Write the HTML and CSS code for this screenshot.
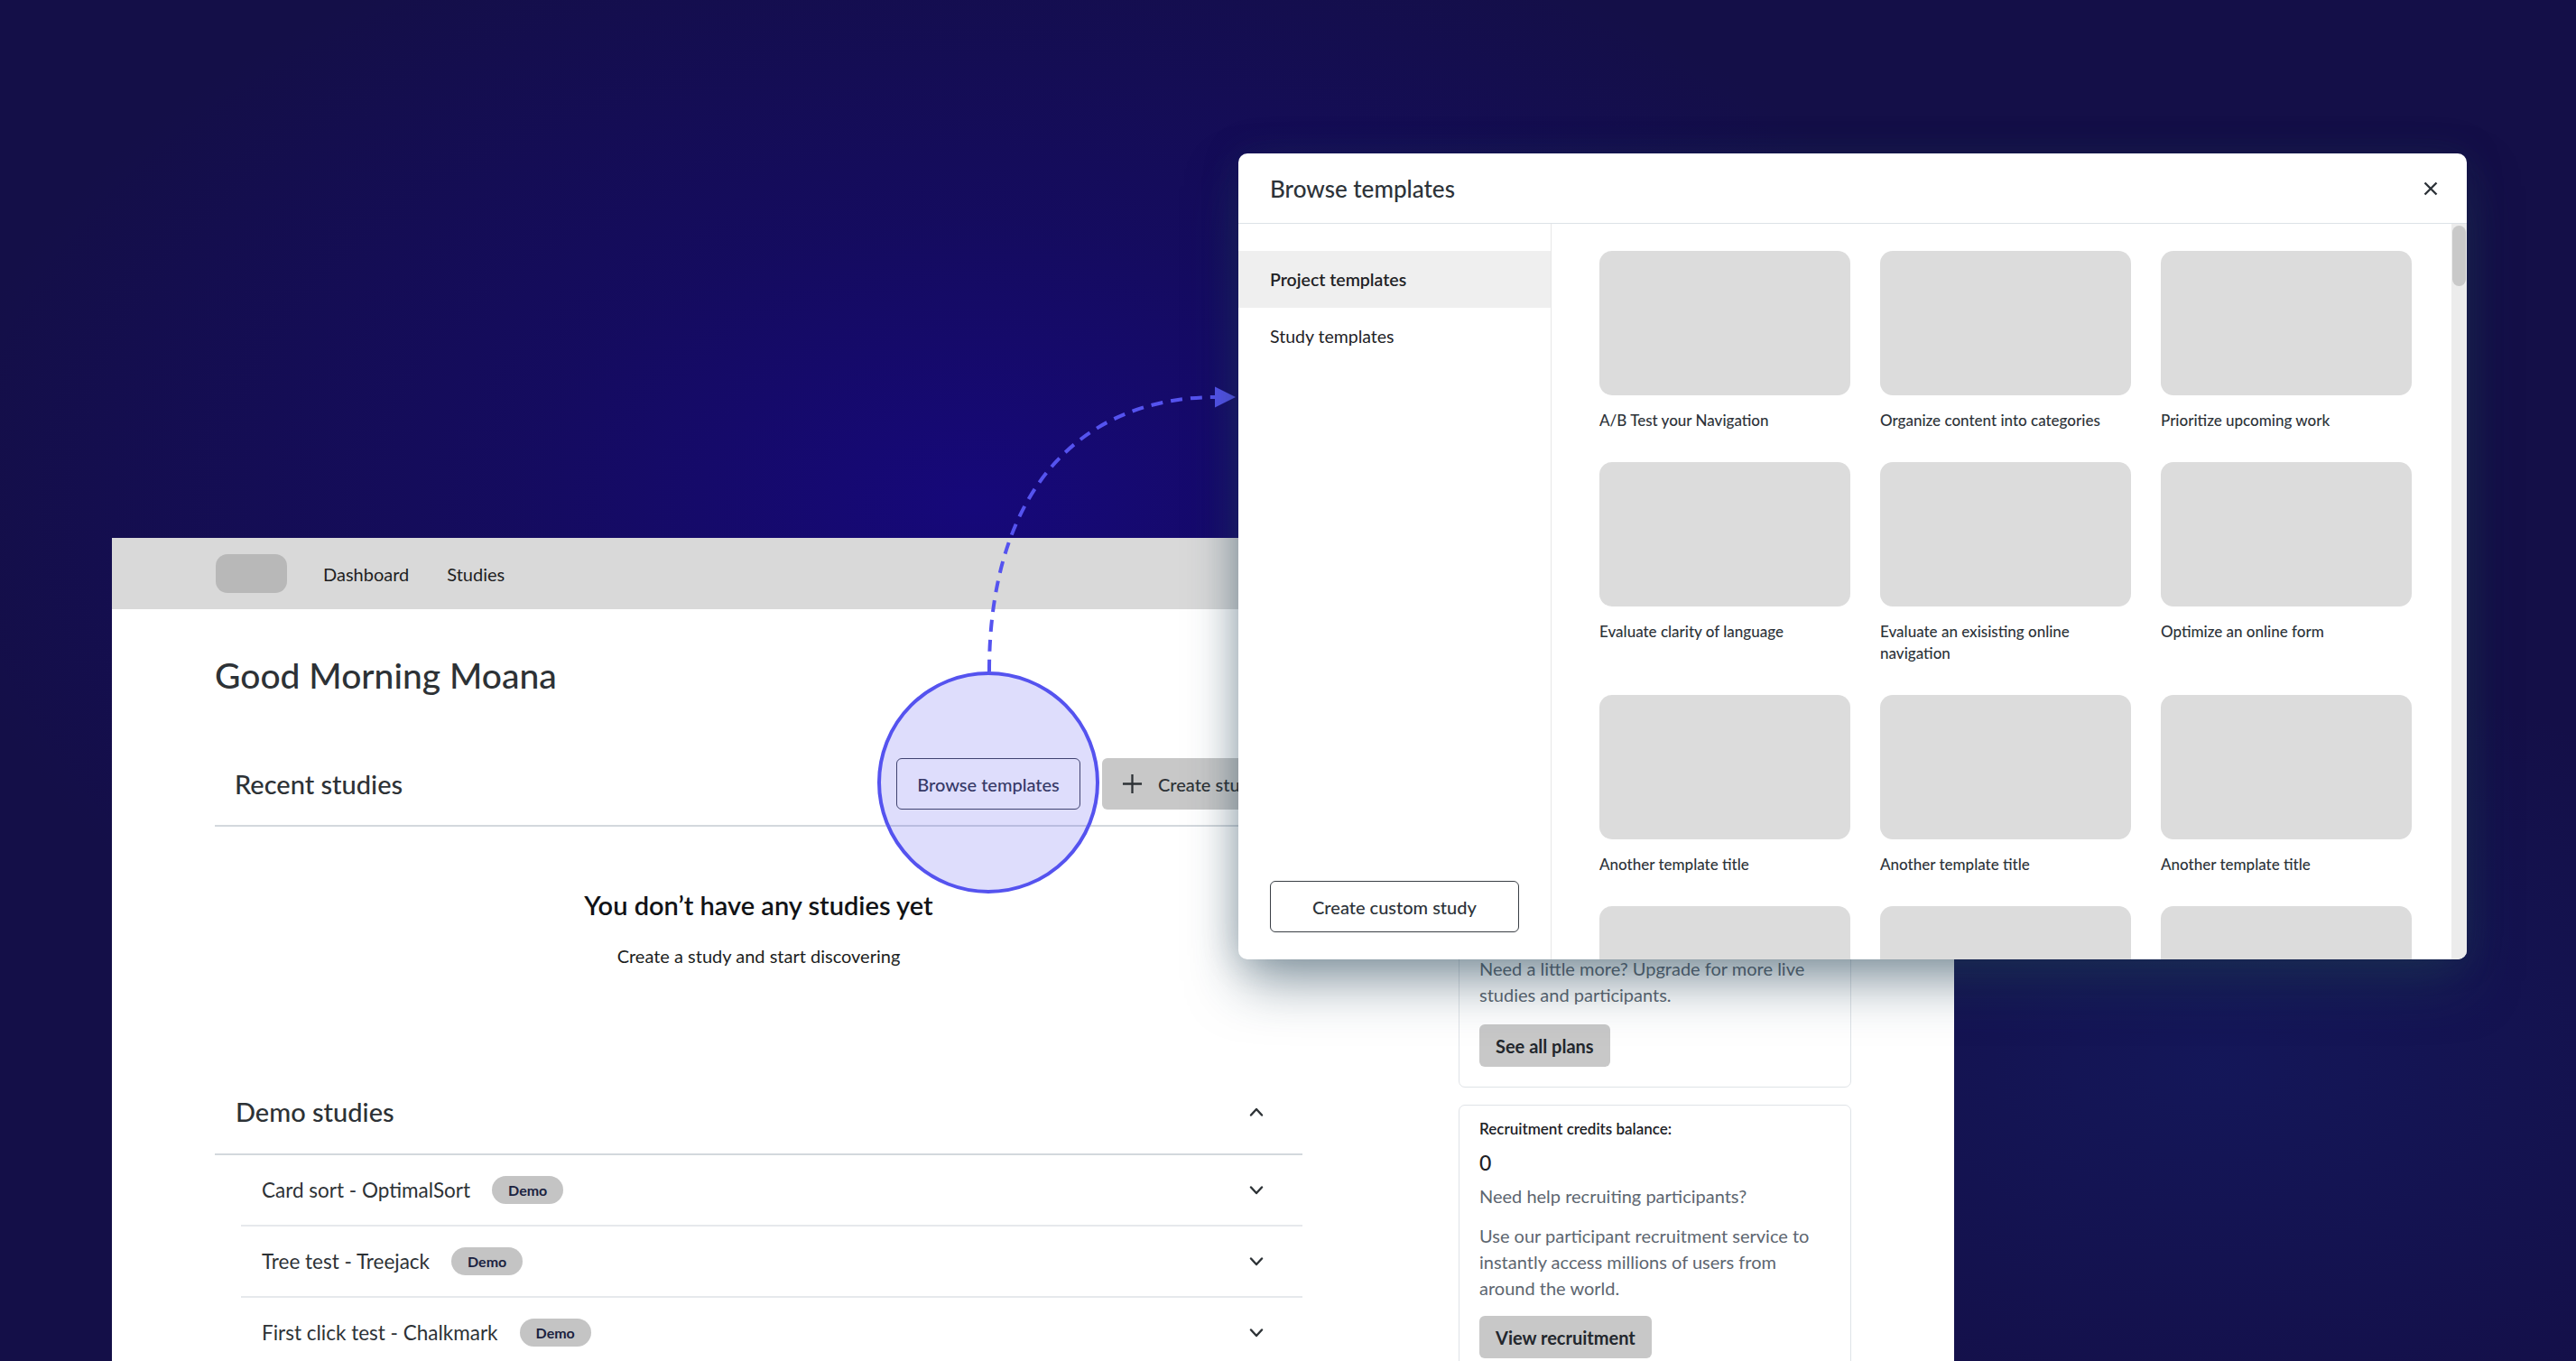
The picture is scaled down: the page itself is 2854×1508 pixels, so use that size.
FILE: index.html
```html
<!DOCTYPE html>
<html lang="en">
<head>
<meta charset="utf-8">
<title>Browse templates</title>
<link rel="stylesheet" href="styles.css">
</head>
<body>
<div class="app">
  <header class="nav">
    <div class="logo"></div>
    <a class="nav-link">Dashboard</a>
    <a class="nav-link">Studies</a>
  </header>
  <div class="main">
    <section class="left">
      <h1 class="greeting">Good Morning Moana</h1>
      <div class="section-head recent-head">
        <h2 class="section-title">Recent studies</h2>
        <div class="actions">
          <button class="btn-outline">Browse templates</button>
          <button class="btn-grey"><svg class="plus" viewBox="0 0 24 24"><path d="M12 1v22M1 12h22"/></svg>Create study</button>
        </div>
      </div>
      <div class="empty">
        <h3 class="empty-title">You don’t have any studies yet</h3>
        <p class="empty-sub">Create a study and start discovering</p>
      </div>
      <div class="section-head demo-head">
        <h2 class="section-title">Demo studies</h2>
        <svg class="chev" viewBox="0 0 16 10"><path d="M2 8.5L8 2l6 6.5"/></svg>
      </div>
      <ul class="demo-list">
        <li class="demo-row"><span class="demo-name">Card sort - OptimalSort</span><span class="badge">Demo</span><svg class="chev" viewBox="0 0 16 10"><path d="M2 1.5L8 8l6-6.5"/></svg></li>
        <li class="demo-row"><span class="demo-name">Tree test - Treejack</span><span class="badge">Demo</span><svg class="chev" viewBox="0 0 16 10"><path d="M2 1.5L8 8l6-6.5"/></svg></li>
        <li class="demo-row"><span class="demo-name">First click test - Chalkmark</span><span class="badge">Demo</span><svg class="chev" viewBox="0 0 16 10"><path d="M2 1.5L8 8l6-6.5"/></svg></li>
      </ul>
    </section>
    <aside class="right">
      <div class="card plan-card">
        <div class="card-label">Current plan:</div>
        <div class="card-value">Free</div>
        <div class="usage-row">Live studies 0 / 1</div>
        <div class="usage-bar"></div>
        <div class="usage-row">Responses 0 / 10</div>
        <div class="usage-bar last"></div>
        <p class="card-text">Need a little more? Upgrade for more live studies and participants.</p>
        <button class="btn-small">See all plans</button>
      </div>
      <div class="card recruit-card">
        <div class="card-label">Recruitment credits balance:</div>
        <div class="card-value zero">0</div>
        <p class="card-text q">Need help recruiting participants?</p>
        <p class="card-text long">Use our participant recruitment service to instantly access millions of users from around the world.</p>
        <button class="btn-small">View recruitment</button>
      </div>
    </aside>
  </div>
</div>

<svg class="overlay" width="2854" height="1508" viewBox="0 0 2854 1508">
  <path class="arrow-line" d="M1096 744 C1096 540 1200 440 1348 440"/>
  <polygon class="arrow-head" points="1369,440 1346,428.5 1346,451.5"/>
  <circle class="spot" cx="1095" cy="867" r="121"/>
</svg>

<div class="modal">
  <div class="modal-head">
    <h2 class="modal-title">Browse templates</h2>
    <svg class="close" viewBox="0 0 16 16"><path d="M1.5 1.5l13 13M14.5 1.5l-13 13"/></svg>
  </div>
  <div class="modal-body">
    <nav class="side">
      <div class="side-item active">Project templates</div>
      <div class="side-item">Study templates</div>
      <button class="btn-custom">Create custom study</button>
    </nav>
    <div class="content">
      <div class="grid">
        <div class="tpl"><div class="thumb"></div><div class="tpl-title">A/B Test your Navigation</div></div>
        <div class="tpl"><div class="thumb"></div><div class="tpl-title">Organize content into categories</div></div>
        <div class="tpl"><div class="thumb"></div><div class="tpl-title">Prioritize upcoming work</div></div>
        <div class="tpl"><div class="thumb"></div><div class="tpl-title">Evaluate clarity of language</div></div>
        <div class="tpl"><div class="thumb"></div><div class="tpl-title">Evaluate an exisisting online navigation</div></div>
        <div class="tpl"><div class="thumb"></div><div class="tpl-title">Optimize an online form</div></div>
        <div class="tpl"><div class="thumb"></div><div class="tpl-title">Another template title</div></div>
        <div class="tpl"><div class="thumb"></div><div class="tpl-title">Another template title</div></div>
        <div class="tpl"><div class="thumb"></div><div class="tpl-title">Another template title</div></div>
        <div class="tpl"><div class="thumb"></div></div>
        <div class="tpl"><div class="thumb"></div></div>
        <div class="tpl"><div class="thumb"></div></div>
      </div>
      <div class="scrollbar"><div class="thumb-bar"></div></div>
    </div>
  </div>
</div>
</body>
</html>
```

FILE: styles.css
```css
* { box-sizing: border-box; }

html, body { margin: 0; padding: 0; }

body {
  width: 2854px;
  height: 1508px;
  overflow: hidden;
  position: relative;
  font-family: Lato, "Open Sans", sans-serif;
  color: #2d3236;
  background:
    radial-gradient(ellipse 1150px 700px at 1080px 560px, rgba(22, 8, 122, 1) 0%, rgba(21, 9, 110, 0.6) 45%, rgba(20, 15, 72, 0) 100%),
    radial-gradient(ellipse 700px 450px at 2450px 1180px, rgba(20, 26, 96, 0.7) 0%, rgba(20, 15, 72, 0) 100%),
    #140f48;
}

/* ---------- App window ---------- */
.app {
  position: absolute;
  left: 124px;
  top: 596px;
  width: 2041px;
  height: 912px;
  background: #ffffff;
  overflow: hidden;
}

.nav {
  height: 79px;
  background: #d9d9d9;
  display: flex;
  align-items: center;
  padding-left: 115px;
}

.logo {
  width: 79px;
  height: 43px;
  border-radius: 13px;
  background: #b8b8b8;
  margin-right: 40px;
}

.nav-link {
  font-size: 20px;
  color: #1f1f1f;
  margin-right: 42px;
}

.main {
  display: flex;
  padding: 0 114px;
  gap: 173px;
}

.left { width: 1205px; }

.greeting {
  margin: 49px 0 0;
  font-size: 39px;
  line-height: 48px;
  font-weight: 500;
  color: #2d3236;
}

.section-head {
  display: flex;
  align-items: center;
  border-bottom: 2px solid #d3d8dd;
}

.recent-head {
  margin-top: 68px;
  padding: 0 0 17px 22px;
}

.section-title {
  margin: 0;
  font-size: 29px;
  line-height: 36px;
  font-weight: 500;
  color: #2d3236;
}

.actions {
  margin-left: auto;
  display: flex;
  gap: 24px;
}

.btn-outline {
  height: 57px;
  width: 204px;
  border: 1.5px solid #3a3e50;
  border-radius: 6px;
  background: transparent;
  font-family: inherit;
  font-size: 20px;
  font-weight: 500;
  color: #2d3345;
}

.btn-grey {
  height: 57px;
  width: 222px;
  padding: 0 0 0 22px;
  border: 0;
  border-radius: 6px;
  background: #c8c8c8;
  display: flex;
  align-items: center;
  gap: 17px;
  font-family: inherit;
  font-size: 20px;
  font-weight: 500;
  color: #2d3236;
}

.plus {
  width: 23px;
  height: 23px;
  fill: none;
  stroke: #2d3236;
  stroke-width: 2.4;
}

.empty {
  text-align: center;
  margin-top: 69px;
}

.empty-title {
  margin: 0;
  font-size: 29px;
  line-height: 36px;
  font-weight: 600;
  color: #111316;
}

.empty-sub {
  margin: 25px 0 0;
  font-size: 20px;
  line-height: 26px;
  color: #1c1e21;
}

.demo-head {
  margin-top: 114px;
  height: 94px;
  padding: 0 43px 0 23px;
  justify-content: space-between;
}

.chev {
  width: 16px;
  height: 10px;
  fill: none;
  stroke: #2d3236;
  stroke-width: 2.4;
  stroke-linecap: round;
  stroke-linejoin: round;
}

.demo-list {
  list-style: none;
  margin: 0 0 0 29px;
  padding: 0;
}

.demo-row {
  display: flex;
  align-items: center;
  height: 79px;
  padding: 0 43px 0 23px;
  border-bottom: 2px solid #e6e9ec;
}

.demo-name {
  font-size: 22.5px;
  color: #2d3236;
}

.badge {
  margin-left: 24px;
  height: 31px;
  padding: 0 18px;
  border-radius: 16px;
  background: #c4c4c4;
  font-size: 16px;
  font-weight: 700;
  line-height: 31px;
  color: #1b2240;
}

.demo-row .chev { margin-left: auto; }

/* right column */
.right {
  width: 435px;
  padding-top: 175px;
}

.card {
  border: 1.5px solid #dfe3e7;
  border-radius: 7px;
  padding: 20px 22px 22px;
}

.card-label {
  font-size: 17px;
  line-height: 22px;
  font-weight: 600;
  color: #1d2126;
  margin-bottom: 12px;
}

.card-value {
  font-size: 23px;
  line-height: 28px;
  font-weight: 500;
  color: #1d2126;
  margin-bottom: 16px;
}

.usage-row {
  font-size: 16px;
  line-height: 22px;
  color: #5d6670;
  margin-bottom: 8px;
}

.usage-bar {
  height: 8px;
  border-radius: 4px;
  background: #e3e6e9;
  margin-bottom: 14px;
}

.usage-bar.last { margin-bottom: 20px; }

.card-text {
  margin: 0;
  font-size: 20px;
  line-height: 29px;
  color: #5d6670;
  max-width: 380px;
}

.btn-small {
  display: block;
  margin-top: 18px;
  height: 47px;
  padding: 0 18px;
  border: 0;
  border-radius: 6px;
  background: #c8c8c8;
  font-family: inherit;
  font-size: 20px;
  font-weight: 700;
  color: #23272d;
}

.recruit-card {
  margin-top: 19px;
  padding-top: 15px;
}

.card-value.zero {
  margin: 10px 0 0;
}

.card-text.q { margin-top: 9px; }
.card-text.long { margin-top: 15px; }
.recruit-card .btn-small { margin-top: 16px; }

/* ---------- overlay ---------- */
.overlay {
  position: absolute;
  left: 0;
  top: 0;
  pointer-events: none;
}

.arrow-line {
  fill: none;
  stroke: #5553ef;
  stroke-width: 4;
  stroke-dasharray: 13 9;
}

.arrow-head { fill: #5553ef; }

.spot {
  fill: rgba(88, 86, 240, 0.2);
  stroke: #5553ef;
  stroke-width: 4;
}

/* ---------- modal ---------- */
.modal {
  position: absolute;
  left: 1372px;
  top: 170px;
  width: 1361px;
  height: 893px;
  background: #ffffff;
  border-radius: 10px;
  overflow: hidden;
  display: flex;
  flex-direction: column;
  box-shadow: 0 30px 60px -6px rgba(30, 62, 82, 0.5), 0 0 40px rgba(30, 62, 82, 0.22);
}

.modal-head {
  height: 78px;
  flex: none;
  display: flex;
  align-items: center;
  justify-content: space-between;
  padding: 0 32px 0 35px;
  border-bottom: 1.5px solid #dde2e7;
}

.modal-title {
  margin: 0;
  font-size: 26px;
  font-weight: 500;
  color: #2d3339;
}

.close {
  width: 16px;
  height: 16px;
  fill: none;
  stroke: #2d3339;
  stroke-width: 2.4;
}

.modal-body {
  flex: 1;
  display: flex;
  min-height: 0;
}

.side {
  width: 347px;
  flex: none;
  border-right: 1.5px solid #e8e8e8;
  display: flex;
  flex-direction: column;
  padding-top: 30px;
}

.side-item {
  height: 63px;
  display: flex;
  align-items: center;
  padding-left: 35px;
  font-size: 19.5px;
  color: #1f2326;
}

.side-item.active {
  background: #efefef;
  font-weight: 600;
}

.btn-custom {
  margin: auto 0 30px 35px;
  width: 276px;
  height: 57px;
  border: 1.5px solid #3a3f45;
  border-radius: 6px;
  background: #ffffff;
  font-family: inherit;
  font-size: 20px;
  font-weight: 500;
  color: #2d3339;
}

.content {
  flex: 1;
  display: flex;
  min-width: 0;
}

.grid {
  flex: 1;
  overflow: hidden;
  display: grid;
  grid-template-columns: repeat(3, 278px);
  column-gap: 33px;
  row-gap: 34px;
  align-content: start;
  padding: 30px 0 0 53px;
}

.thumb {
  height: 160px;
  border-radius: 14px;
  background: #dcdcdc;
}

.tpl-title {
  margin-top: 16px;
  font-size: 17px;
  line-height: 24px;
  font-weight: 500;
  color: #2d3339;
}

.scrollbar {
  width: 17px;
  flex: none;
  background: #ececec;
  padding: 2px 1px;
}

.thumb-bar {
  height: 67px;
  border-radius: 8px;
  background: #c9c9c9;
}
```
